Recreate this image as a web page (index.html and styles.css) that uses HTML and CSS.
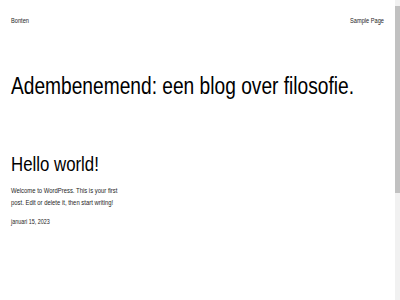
FILE: index.html
```html
<!DOCTYPE html>
<html lang="nl">
<head>
<meta charset="utf-8">
<title>Bonten</title>
<link rel="stylesheet" href="styles.css">
</head>
<body>
<div class="frame">
  <div class="viewport">
    <div class="page">
      <header class="site-header">
        <a class="site-title" href="#">Bonten</a>
        <nav class="site-nav"><a href="#">Sample Page</a></nav>
      </header>
      <h1 class="tagline">Adembenemend: een blog over filosofie.</h1>
      <article class="post">
        <h2 class="post-title">Hello world!</h2>
        <p class="post-excerpt">Welcome to WordPress. This is your first post. Edit or delete it, then start writing!</p>
        <div class="post-date">januari 15, 2023</div>
      </article>
    </div>
  </div>
  <div class="scrollbar">
    <div class="scroll-arrow up"></div>
    <div class="scroll-track"><div class="scroll-thumb"></div></div>
    <div class="scroll-arrow down"></div>
  </div>
</div>
</body>
</html>
```
FILE: styles.css
```css
html, body {
  margin: 0;
  padding: 0;
  height: 100%;
  overflow: hidden;
  background: #ffffff;
}
body {
  font-family: "Liberation Sans", Arial, sans-serif;
  color: #000;
}
.frame {
  display: flex;
  width: 400px;
  height: 300px;
}
.viewport {
  flex: 1;
  min-width: 0;
  overflow: hidden;
}
/* the page is laid out wide and condensed horizontally, like the reference */
.page {
  width: 474px;
  box-sizing: border-box;
  padding: 0 13.2px;
  transform: scaleX(0.8333);
  transform-origin: 0 0;
}
.site-header {
  display: flex;
  justify-content: space-between;
  padding-top: 16px;
  font-size: 6.8px;
  line-height: 10px;
}
.site-header a {
  color: #1e1e1e;
  text-decoration: none;
}
.tagline {
  margin: 46px 0 0;
  font-size: 23px;
  line-height: 28px;
  font-weight: 400;
  color: #000;
  white-space: nowrap;
}
.post {
  margin-top: 52px;
}
.post-title {
  margin: 0;
  font-size: 20.2px;
  line-height: 24px;
  font-weight: 400;
  color: #000;
}
.post-excerpt {
  margin: 9px 0 0;
  width: 136px;
  font-size: 7.1px;
  line-height: 12px;
  color: #1e1e1e;
}
.post-date {
  margin-top: 8px;
  font-size: 6.5px;
  line-height: 10px;
  color: #1e1e1e;
}
.scrollbar {
  width: 5px;
  height: 300px;
  background: #f1f1f1;
  display: flex;
  flex-direction: column;
}
.scroll-arrow {
  height: 5px;
  flex: none;
}
.scroll-track {
  flex: 1;
}
.scroll-thumb {
  margin-top: 1px;
  height: 187px;
  background: #c1c1c1;
}
```
